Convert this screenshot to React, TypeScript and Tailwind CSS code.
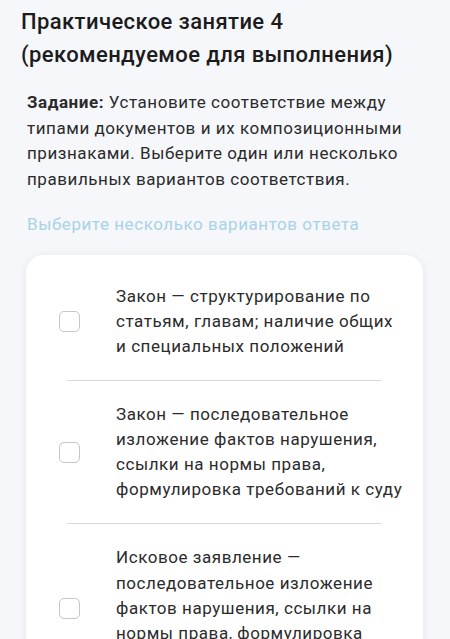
export default function App() {
  const options = [
    {
      text: "Закон — структурирование по статьям, главам; наличие общих и специальных положений",
    },
    {
      text: "Закон — последовательное изложение фактов нарушения, ссылки на нормы права, формулировка требований к суду",
    },
    {
      text: "Исковое заявление — последовательное изложение фактов нарушения, ссылки на нормы права, формулировка требований к суду",
    },
  ];

  return (
    <div
      className="h-[639px] bg-[#f5f7fa] overflow-hidden"
      style={{ fontFamily: "Roboto, 'Noto Sans', sans-serif" }}
    >
      <h1 className="px-[21px] pt-[5px] text-[22px] leading-[33px] font-medium text-[#1c1c1c] tracking-[0.4px]">
        Практическое занятие 4 (рекомендуемое для выполнения)
      </h1>

      <p className="mt-[19px] pl-[27px] pr-[20px] text-[17px] leading-[25.7px] text-[#2b2b2b] tracking-[0.55px]">
        <span className="font-bold">Задание:</span> Установите соответствие
        между типами документов и их композиционными признаками. Выберите один
        или несколько правильных вариантов соответствия.
      </p>

      <p className="mt-[19px] pl-[27px] text-[17px] leading-[25px] text-[#a9d3e6] tracking-[0.55px]">
        Выберите несколько вариантов ответа
      </p>

      {/* Options card */}
      <div className="mt-[18px] ml-[26px] mr-[27px] bg-white rounded-[18px] shadow-[0_2px_10px_rgba(0,0,0,0.08)] pt-[8px]">
        {options.map((o, i) => (
          <div key={i}>
            {i > 0 && <div className="mx-[41px] h-px bg-[#d9d9d9]" />}
            <div className="flex items-center py-[21px]">
              <div className="ml-[33px] w-[21px] h-[21px] shrink-0 rounded-[5px] border border-[#c6c6c6] bg-white" />
              <div className="ml-[36px] w-[288px] text-[17px] leading-[25.1px] text-[#2b2b2b] tracking-[0.55px]">
                {o.text}
              </div>
            </div>
          </div>
        ))}
      </div>
    </div>
  );
}
